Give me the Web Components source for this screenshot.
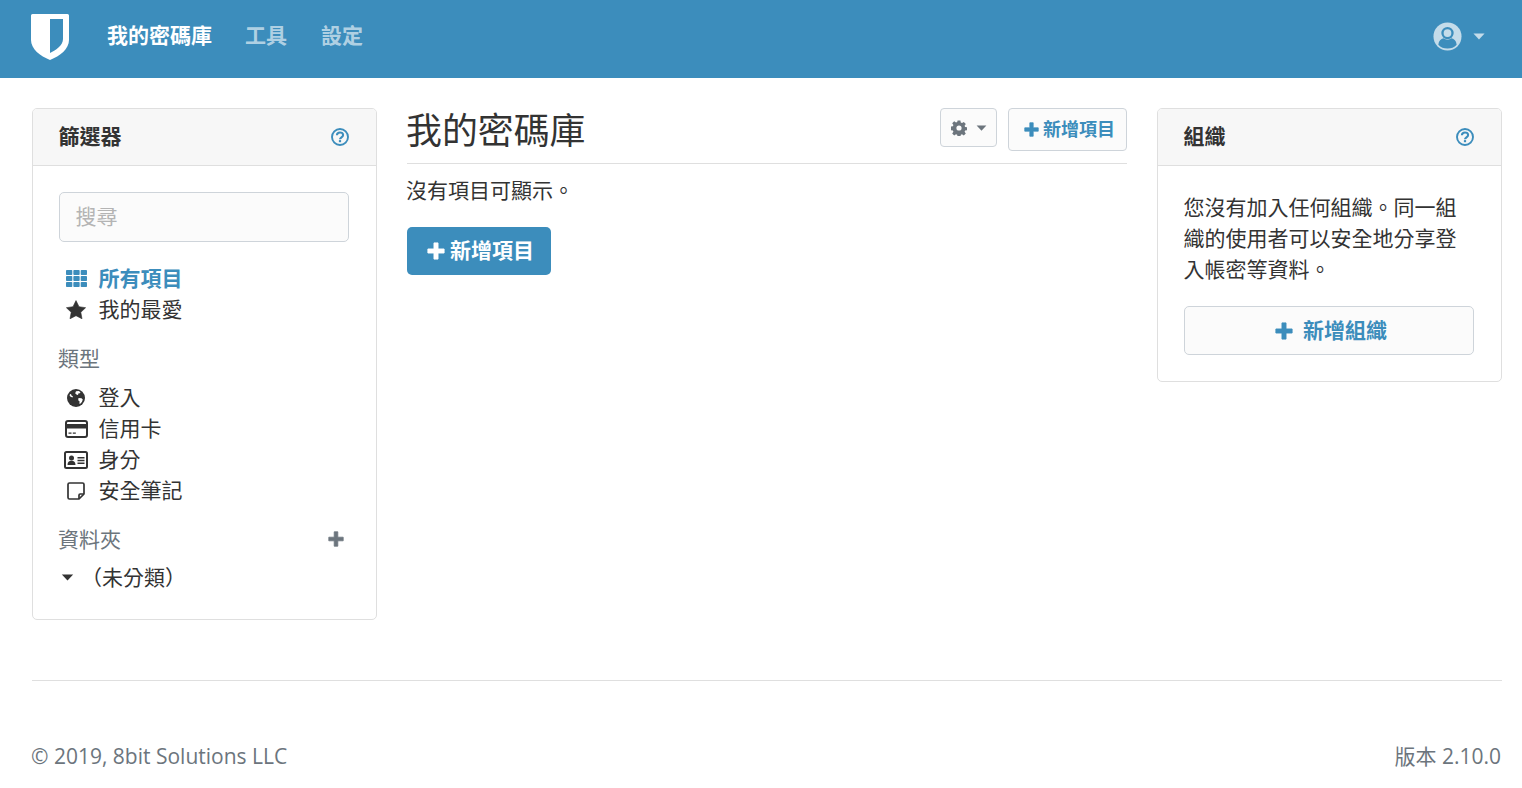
<!DOCTYPE html>
<html lang="zh-Hant">
<head>
<meta charset="utf-8">
<title>我的密碼庫</title>
<style>
    html, body { margin: 0; padding: 0; background: #fff; }
    body {
        font-family: "Open Sans", "Noto Sans CJK TC", sans-serif;
        font-size: 21px;
        line-height: 31px;
        color: #333;
    }
</style>
</head>
<body>
<bw-navbar></bw-navbar>
<bw-layout>
    <bw-card slot="left" heading="篩選器">
        <bw-filters></bw-filters>
    </bw-card>
    <bw-vault slot="main"></bw-vault>
    <bw-card slot="right" heading="組織">
        <bw-organizations></bw-organizations>
    </bw-card>
</bw-layout>
<bw-footer></bw-footer>

<script>
// Icons are kept together so that every component can ask for one by name
const ICONS = {
    plus: `<svg viewBox="0 0 16 16"><path fill="currentColor" stroke="currentColor" stroke-width=".8" stroke-linejoin="round" d="M6.200.8h3.600v5.400h5.400v3.600H9.800v5.400H6.200V9.800H.8V6.200h5.400z"/></svg>`,
    th: `<svg viewBox="0 0 21 17"><g fill="currentColor">
        <rect x="0" y="0" width="6.300" height="5" rx=".8"/><rect x="7.350" y="0" width="6.300" height="5" rx=".8"/><rect x="14.700" y="0" width="6.300" height="5" rx=".8"/>
        <rect x="0" y="6" width="6.300" height="5" rx=".8"/><rect x="7.350" y="6" width="6.300" height="5" rx=".8"/><rect x="14.700" y="6" width="6.300" height="5" rx=".8"/>
        <rect x="0" y="12" width="6.300" height="5" rx=".8"/><rect x="7.350" y="12" width="6.300" height="5" rx=".8"/><rect x="14.700" y="12" width="6.300" height="5" rx=".8"/>
    </g></svg>`,
    star: `<svg viewBox="0 0 20 19"><path fill="currentColor" stroke="currentColor" stroke-width=".6" stroke-linejoin="round" d="M10 .6l3 6.100 6.600 1-4.800 4.600 1.200 6.500-6-3.100-6 3.100 1.200-6.500L.4 7.700l6.600-1z"/></svg>`,
    globe: `<svg viewBox="0 0 18 18"><circle cx="9" cy="9" r="9" fill="currentColor"/>
        <path fill="#fff" d="M9 2.200l2.800-.2 1.700 1.300-.7 1-1.500.2-.2 1.200-1.300.3-.5-1.100-1.200-.5zM11.500 9l3 .2 1.300 1.400-.9 2.500-1.900 1.800-.6-.3.200-2-1.400-1.400zM3 5l1.100.2.400 1.300 1.400.8-.4 1.100-1.900-.6-1-1.300z"/></svg>`,
    card: `<svg viewBox="0 0 23 18"><rect x="1" y="1" width="21" height="16" rx="2" fill="none" stroke="currentColor" stroke-width="2"/>
        <rect x="1" y="4" width="21" height="4.500" fill="currentColor"/>
        <path fill="currentColor" d="M3.500 12.500h3v1.300h-3zM7.800 12.500h3v1.300h-3z"/></svg>`,
    idcard: `<svg viewBox="0 0 24 18"><rect x="1" y="1" width="22" height="16" rx="1.500" fill="none" stroke="currentColor" stroke-width="2"/>
        <circle cx="7.500" cy="7" r="2.500" fill="currentColor"/>
        <path fill="currentColor" d="M3.500 14c0-3 1.500-4.300 4-4.300s4 1.300 4 4.300zM13.500 6h7v1.400h-7zM13.500 8.800h7v1.400h-7zM13.500 11.600h7v1.400h-7z"/></svg>`,
    note: `<svg viewBox="0 0 18 18"><path fill="none" stroke="currentColor" stroke-width="1.700" stroke-linejoin="round" d="M2.500 1h13A1.500 1.500 0 0 1 17 2.500V12l-5 5H2.500A1.500 1.500 0 0 1 1 15.500v-13A1.500 1.500 0 0 1 2.500 1z"/>
        <path fill="none" stroke="currentColor" stroke-width="1.700" d="M12 17v-3.800a1.200 1.200 0 0 1 1.200-1.200H17"/></svg>`,
    caret: `<svg viewBox="0 0 14 8"><path fill="currentColor" d="M.5.500h13L7 7.500z"/></svg>`,
    cog: `<svg viewBox="0 0 16 16"><path fill="currentColor" fill-rule="evenodd" d="M6.600.5h2.800l.4 2.100 1.200.5 1.800-1.200 2 2-1.200 1.800.5 1.200 2.100.4v2.800l-2.100.4-.5 1.200 1.200 1.800-2 2-1.800-1.200-1.200.5-.4 2.100H6.600l-.4-2.100-1.200-.5-1.800 1.200-2-2 1.200-1.800-.5-1.200-2.100-.4V6.600l2.100-.4.500-1.200-1.200-1.800 2-2 1.800 1.200 1.200-.5zM8 5.400a2.600 2.600 0 1 0 0 5.200 2.600 2.600 0 0 0 0-5.200z"/></svg>`,
    help: `<svg viewBox="0 0 18 18"><circle cx="9" cy="9" r="8" fill="none" stroke="currentColor" stroke-width="1.900"/>
        <path fill="none" stroke="currentColor" stroke-width="2.100" d="M5.900 7.200C6 5.500 7.300 4.500 9 4.500c1.800 0 3.100 1 3.100 2.500 0 2.300-3.100 2.300-3.100 4.300"/>
        <rect x="7.900" y="12.100" width="2.200" height="2.100" fill="currentColor"/></svg>`,
    user: `<svg viewBox="0 0 30 30"><circle cx="15" cy="15" r="14.500" fill="currentColor"/>
        <circle cx="15" cy="11.500" r="5.200" fill="none" stroke="#3c8dbc" stroke-width="2.400"/>
        <path fill="#3c8dbc" d="M5.500 23.500c.5-4 2.600-6 5.300-6.600 2.500 1.800 5.900 1.800 8.400 0 2.700.6 4.800 2.600 5.300 6.600-2.500 2.600-5.700 4-9.500 4s-7-1.400-9.500-4z"/></svg>`,
    logo: `<svg viewBox="0 0 38 46"><path fill="#fff" fill-rule="evenodd" d="M1.500 0h35A1.500 1.500 0 0 1 38 1.500V26c0 9-9 16-19 20C9 42 0 35 0 26V1.500A1.500 1.500 0 0 1 1.500 0zM19 5v34c6-3 13-7.500 13-14V5z"/></svg>`
};

// Small wrapper so that icons can be used as <bw-icon name="plus">
class BwIcon extends HTMLElement {
    constructor() {
        super();
        this._shadowRoot = this.attachShadow({ mode: 'open' });
    }

    connectedCallback() {
        const w = this.getAttribute('w') || 16;
        const h = this.getAttribute('h') || w;
        this._shadowRoot.innerHTML = `
            <style>
                :host { display: inline-flex; flex: none; }
                svg { display: block; width: ${w}px; height: ${h}px; }
            </style>
            ${ICONS[this.getAttribute('name')]}
        `;
    }
}
customElements.define('bw-icon', BwIcon);

class BwNavbar extends HTMLElement {
    constructor() {
        super();
        this._shadowRoot = this.attachShadow({ mode: 'open' });
        this._shadowRoot.innerHTML = `
            <style>
                :host {
                    display: flex;
                    align-items: center;
                    height: 78px;
                    background: #3c8dbc;
                    padding: 0 37px 0 31px;
                    box-sizing: border-box;
                }
                .logo { display: block; margin: -4px 21px 0 0; }
                a {
                    padding: 0 17px;
                    font-weight: 700;
                    color: rgba(255,255,255,.62);
                    margin-bottom: 8px;
                }
                a.active { color: #fff; padding-right: 16px; }
                .user {
                    margin-left: auto;
                    display: flex;
                    align-items: center;
                    gap: 11px;
                    color: #c4dcea;
                    margin-top: -6px;
                }
            </style>
            <bw-icon class="logo" name="logo" w="38" h="46"></bw-icon>
            <a class="active">我的密碼庫</a>
            <a>工具</a>
            <a>設定</a>
            <div class="user">
                <bw-icon name="user" w="29"></bw-icon>
                <bw-icon name="caret" w="12" h="7"></bw-icon>
            </div>
        `;
    }
}
customElements.define('bw-navbar', BwNavbar);

class BwLayout extends HTMLElement {
    constructor() {
        super();
        this._shadowRoot = this.attachShadow({ mode: 'open' });
        this._shadowRoot.innerHTML = `
            <style>
                :host {
                    display: grid;
                    grid-template-columns: 345px 720px 345px;
                    column-gap: 30px;
                    align-items: start;
                    padding: 30px 20px 0 32px;
                }
            </style>
            <slot name="left"></slot>
            <slot name="main"></slot>
            <slot name="right"></slot>
        `;
    }
}
customElements.define('bw-layout', BwLayout);

class BwCard extends HTMLElement {
    constructor() {
        super();
        this._shadowRoot = this.attachShadow({ mode: 'open' });
    }

    connectedCallback() {
        this._shadowRoot.innerHTML = `
            <style>
                :host {
                    display: block;
                    border: 1px solid #dfdfdf;
                    border-radius: 5px;
                    background: #fff;
                }
                header {
                    display: flex;
                    align-items: center;
                    justify-content: space-between;
                    height: 56px;
                    padding: 0 27px 0 25.500px;
                    background: #f7f7f7;
                    border-bottom: 1px solid #dfdfdf;
                    border-radius: 4px 4px 0 0;
                    font-weight: 700;
                }
                header span { margin-bottom: 2px; }
                header bw-icon { color: #3c8dbc; }
                .body { padding: 26px 27px 26px 26px; }
            </style>
            <header>
                <span>${this.getAttribute('heading')}</span>
                <bw-icon name="help" w="18"></bw-icon>
            </header>
            <div class="body"><slot></slot></div>
        `;
    }
}
customElements.define('bw-card', BwCard);

class BwFilterItem extends HTMLElement {
    constructor() {
        super();
        this._shadowRoot = this.attachShadow({ mode: 'open' });
    }

    connectedCallback() {
        const icon = this.getAttribute('icon');
        const w = this.getAttribute('w');
        const h = this.getAttribute('h');
        this._shadowRoot.innerHTML = `
            <style>
                :host {
                    display: flex;
                    align-items: center;
                    height: 31px;
                }
                :host([active]) { color: #3c8dbc; font-weight: 600; }
                .icon { width: 32px; display: flex; justify-content: center; margin: 0 6.500px 0 1px; }
            </style>
            <span class="icon"><bw-icon name="${icon}" w="${w}" h="${h}"></bw-icon></span>
            <slot></slot>
        `;
    }
}
customElements.define('bw-filter-item', BwFilterItem);

class BwFilters extends HTMLElement {
    constructor() {
        super();
        this._shadowRoot = this.attachShadow({ mode: 'open' });
        this._shadowRoot.innerHTML = `
            <style>
                :host { display: block; }
                .search {
                    height: 50px;
                    box-sizing: border-box;
                    width: 290px;
                    border: 1px solid #ced4da;
                    border-radius: 5px;
                    background: #fbfbfb;
                    color: #b4b4b4;
                    padding: 8px 15.500px;
                    margin-bottom: 21px;
                }
                h3 {
                    display: flex;
                    justify-content: space-between;
                    align-items: center;
                    margin: 18px 0 8px -1px;
                    font-size: 21px;
                    line-height: 31px;
                    font-weight: 400;
                    color: #6c757d;
                }
                h3 bw-icon { margin: 0 5px 2px 0; }
                .folder { display: flex; align-items: center; height: 31px; margin-top: -1px; }
                .folder bw-icon { margin: 0 7px 0 2px; }
            </style>
            <div class="search">搜尋</div>
            <bw-filter-item active icon="th" w="21" h="17">所有項目</bw-filter-item>
            <bw-filter-item icon="star" w="20" h="19">我的最愛</bw-filter-item>
            <h3>類型</h3>
            <bw-filter-item icon="globe" w="18" h="18">登入</bw-filter-item>
            <bw-filter-item icon="card" w="23" h="18">信用卡</bw-filter-item>
            <bw-filter-item icon="idcard" w="24" h="18">身分</bw-filter-item>
            <bw-filter-item icon="note" w="18" h="18">安全筆記</bw-filter-item>
            <h3>資料夾<bw-icon name="plus" w="16"></bw-icon></h3>
            <div class="folder"><bw-icon name="caret" w="13" h="7"></bw-icon>（未分類）</div>
        `;
    }
}
customElements.define('bw-filters', BwFilters);

class BwVault extends HTMLElement {
    constructor() {
        super();
        this._shadowRoot = this.attachShadow({ mode: 'open' });
        this._shadowRoot.innerHTML = `
            <style>
                :host { display: block; }
                .head {
                    display: flex;
                    justify-content: space-between;
                    align-items: flex-start;
                    height: 55px;
                    border-bottom: 1px solid #dfdfdf;
                }
                h1 { margin: 1px 0 0 -1px; font-size: 35.9px; line-height: 44px; font-weight: 400; }
                .tools { display: flex; gap: 11px; }
                .btn {
                    display: flex;
                    align-items: center;
                    box-sizing: border-box;
                    border: 1px solid #ced4da;
                    border-radius: 4px;
                    background: #fbfbfb;
                    font-weight: 600;
                }
                .gear { width: 57px; height: 39px; color: #6c757d; padding-left: 10px; gap: 9px; }
                .add {
                    width: 119px; height: 43px; color: #3c8dbc;
                    font-size: 18px; padding-left: 15px; gap: 4px;
                }
                p { margin: 11px 0 21px -1px; }
                .primary {
                    display: inline-flex;
                    align-items: center;
                    gap: 5px;
                    height: 48px;
                    box-sizing: border-box;
                    padding: 0 17px 2px 20px;
                    background: #3c8dbc;
                    border-radius: 5px;
                    color: #fff;
                    font-weight: 700;
                }
                .primary bw-icon { margin-top: 1px; }
            </style>
            <div class="head">
                <h1>我的密碼庫</h1>
                <div class="tools">
                    <div class="btn gear"><bw-icon name="cog" w="16"></bw-icon><bw-icon name="caret" w="11" h="6"></bw-icon></div>
                    <div class="btn add"><bw-icon name="plus" w="15"></bw-icon>新增項目</div>
                </div>
            </div>
            <p>沒有項目可顯示。</p>
            <div class="primary"><bw-icon name="plus" w="18"></bw-icon>新增項目</div>
        `;
    }
}
customElements.define('bw-vault', BwVault);

class BwOrganizations extends HTMLElement {
    constructor() {
        super();
        this._shadowRoot = this.attachShadow({ mode: 'open' });
        this._shadowRoot.innerHTML = `
            <style>
                :host { display: block; }
                p { margin: 0 0 21px -.5px; }
                .btn {
                    display: flex;
                    align-items: center;
                    justify-content: center;
                    gap: 10px;
                    height: 49px;
                    box-sizing: border-box;
                    border: 1px solid #ced4da;
                    border-radius: 5px;
                    background: #fbfbfb;
                    color: #3c8dbc;
                    font-weight: 600;
                    padding-left: 4px;
                }
            </style>
            <p>您沒有加入任何組織。同一組織的使用者可以安全地分享登入帳密等資料。</p>
            <div class="btn"><bw-icon name="plus" w="18"></bw-icon>新增組織</div>
        `;
    }
}
customElements.define('bw-organizations', BwOrganizations);

class BwFooter extends HTMLElement {
    constructor() {
        super();
        this._shadowRoot = this.attachShadow({ mode: 'open' });
        this._shadowRoot.innerHTML = `
            <style>
                :host {
                    display: flex;
                    justify-content: space-between;
                    margin: 60px 20px 0 32px;
                    padding-top: 60px;
                    border-top: 1px solid #dfdfdf;
                    color: #6c757d;
                }
                span:first-of-type { margin-left: -1px; }
                span:last-of-type { margin-right: 1px; }
            </style>
            <span>© 2019, 8bit Solutions LLC</span>
            <span>版本 2.10.0</span>
        `;
    }
}
customElements.define('bw-footer', BwFooter);
</script>
</body>
</html>
